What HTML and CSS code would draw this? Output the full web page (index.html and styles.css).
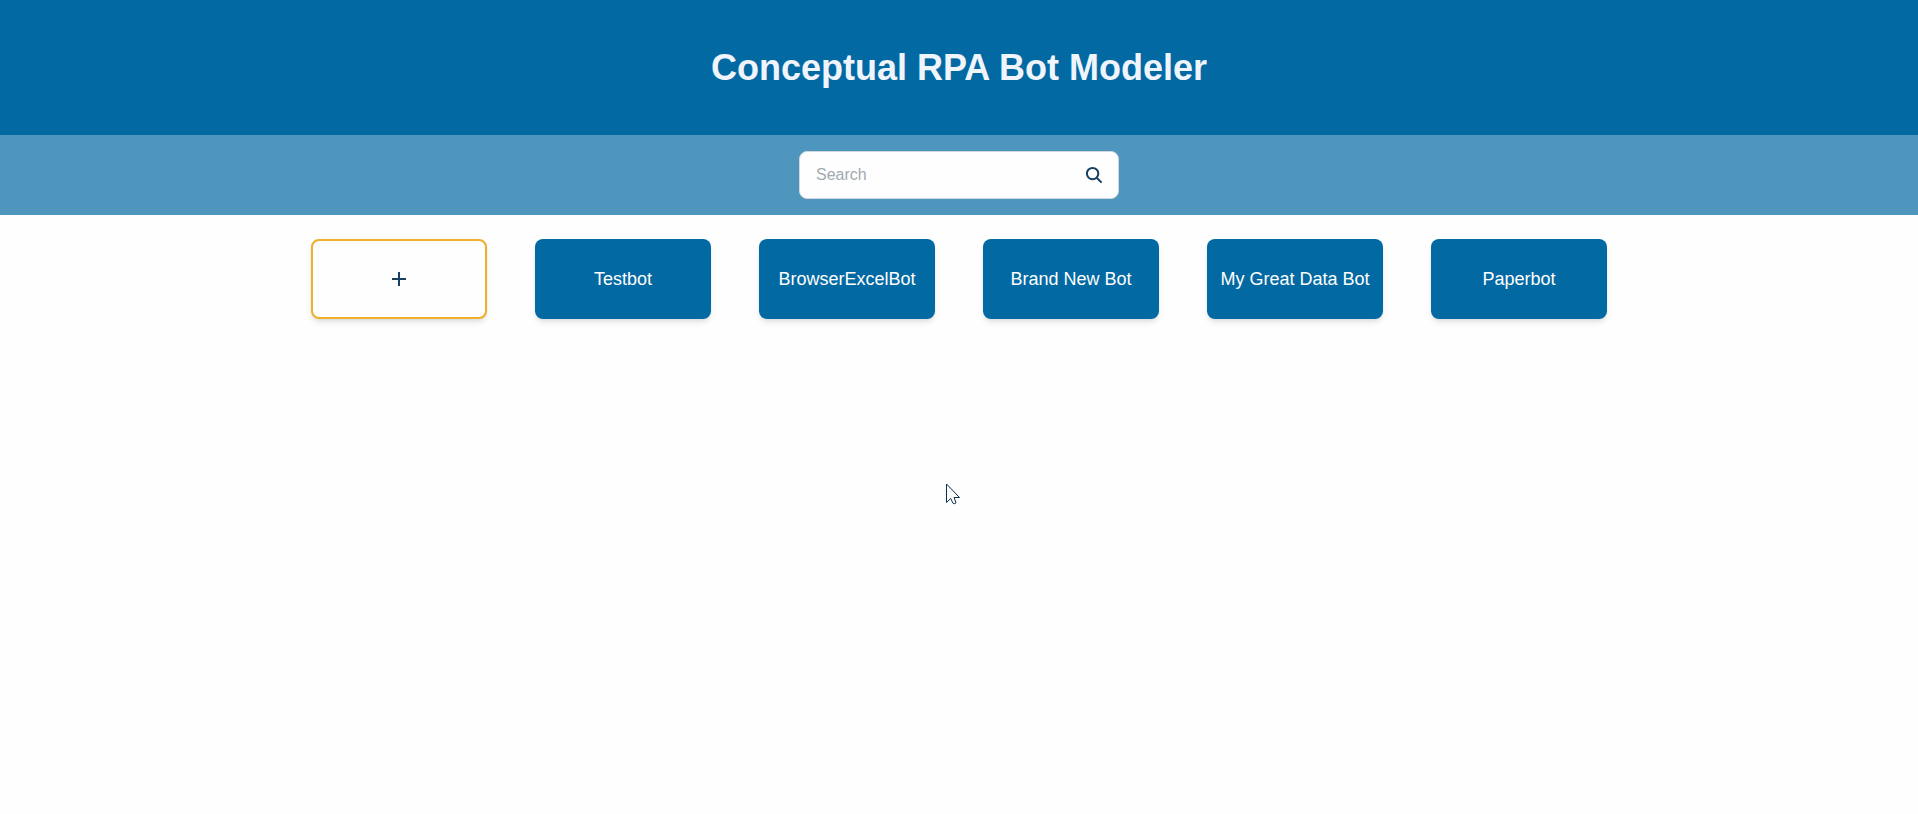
FILE: index.html
```html
<!DOCTYPE html>
<html lang="en">
<head>
<meta charset="utf-8">
<meta name="viewport" content="width=device-width, initial-scale=1">
<title>Conceptual RPA Bot Modeler</title>
<link rel="stylesheet" href="styles.css">
</head>
<body>
<header class="header">
  <h1 class="title">Conceptual RPA Bot Modeler</h1>
</header>
<form class="search-bar" role="search">
  <div class="search-box">
    <input class="search-input" type="text" placeholder="Search" aria-label="Search">
    <button class="search-button" type="button" aria-label="Search bots">
      <svg class="icon icon-search" viewBox="0 0 24 24" aria-hidden="true"><circle cx="10.600" cy="10.600" r="5.700"/><path d="M14.700 14.700l4.900 4.900"/></svg>
    </button>
  </div>
</form>
<main class="bots">
  <button class="card card-add" type="button" aria-label="Add bot">
    <svg class="icon" viewBox="0 0 24 24" aria-hidden="true"><path d="M19 13h-6v6h-2v-6H5v-2h6V5h2v6h6v2z"/></svg>
  </button>
  <button class="card" type="button">Testbot</button>
  <button class="card" type="button">BrowserExcelBot</button>
  <button class="card" type="button">Brand New Bot</button>
  <button class="card" type="button">My Great Data Bot</button>
  <button class="card" type="button">Paperbot</button>
</main>
<svg class="cursor" viewBox="0 0 16 24" aria-hidden="true"><path d="M.5 1v18.500l4.200-4 2.300 4.800q1.600.9 3-.4L8 14.500h5.500z"/></svg>
</body>
</html>
```
FILE: styles.css
```css
* {
  box-sizing: border-box;
}

body {
  margin: 0;
  min-height: 100vh;
  background: #fefefe;
  color: #163f61;
  font-family: "Liberation Sans", Arial, sans-serif;
}

.header {
  padding: 45px 16px;
  background: #0369a3;
  text-align: center;
}

.title {
  margin: 0;
  color: #f0f5fb;
  font-size: 36px;
  line-height: 45px;
}

.search-bar {
  display: flex;
  justify-content: center;
  padding: 16px;
  background: #4f96bf;
}

.search-box {
  display: flex;
  align-items: center;
  width: 320px;
  max-width: 100%;
  height: 48px;
  padding: 0 12px 0 16px;
  border: 1px solid #d3d6dc;
  border-radius: 8px;
  background: #fefefe;
}

.search-input {
  flex: 1;
  min-width: 0;
  padding: 0;
  border: 0;
  outline: 0;
  background: transparent;
  color: #163f61;
  font: inherit;
  font-size: 16px;
  line-height: 24px;
}

.search-input::placeholder {
  color: #a0aab0;
}

.search-button {
  display: flex;
  padding: 0;
  border: 0;
  background: transparent;
  color: inherit;
}

.icon {
  width: 24px;
  height: 24px;
  fill: currentColor;
}

.icon-search {
  fill: none;
  stroke: currentColor;
  stroke-width: 2;
}

.bots {
  display: flex;
  flex-wrap: wrap;
  justify-content: center;
  gap: 48px;
  padding: 24px;
}

.card {
  display: flex;
  align-items: center;
  justify-content: center;
  width: 176px;
  height: 80px;
  padding: 0 8px;
  border: 0;
  border-radius: 8px;
  background: #0369a3;
  box-shadow: 0 4px 6px -1px rgba(0, 0, 0, 0.1), 0 2px 4px -1px rgba(0, 0, 0, 0.06);
  color: #fefefe;
  font: inherit;
  font-size: 18px;
  line-height: 28px;
}

.card-add {
  border: 2px solid #efae2b;
  background: #fefefe;
  color: #163f61;
}

.cursor {
  position: absolute;
  top: 483px;
  left: 946px;
  width: 16px;
  height: 24px;
  fill: #fefefe;
  stroke: #0c2f50;
  pointer-events: none;
}
```
